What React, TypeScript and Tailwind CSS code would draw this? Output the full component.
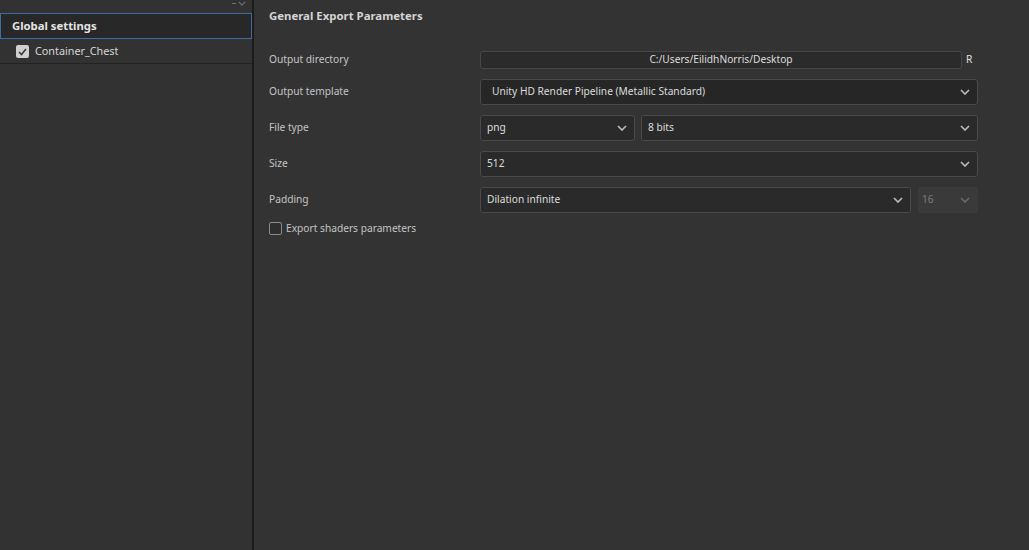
import React from "react";

const Chevron = ({ className = "" }: { className?: string }) => (
  <svg width="10" height="6" viewBox="0 0 10 6" className={className} fill="none">
    <path d="M1 1 L5 5 L9 1" stroke="currentColor" strokeWidth="1.6" />
  </svg>
);

const Select = ({ text, className = "", pl = "pl-[6px]", disabled = false }: { text: string; className?: string; pl?: string; disabled?: boolean }) => (
  <div
    className={`flex h-[26px] items-center justify-between rounded-[3px] border pr-[7px] ${pl} ${
      disabled ? "border-[#3b3b3b] bg-[#3a3a3a] text-[#7a7a7a]" : "border-[#4a4a4a] bg-[#2a2a2a] text-[#dcdcdc]"
    } ${className}`}
  >
    <span>{text}</span>
    <Chevron className={disabled ? "text-[#6a6a6a]" : "text-[#bdbdbd]"} />
  </div>
);

const Label = ({ children }: { children: React.ReactNode }) => (
  <div className="w-[211px] shrink-0 text-[#c4c4c4]">{children}</div>
);

export default function App() {
  return (
    <div
      className="flex h-[550px] w-[1029px] overflow-hidden bg-[#333333] text-[10.2px]"
      style={{ fontFamily: '"Noto Sans", "Open Sans", sans-serif' }}
    >
      {/* Left panel */}
      <div className="flex w-[252px] shrink-0 flex-col bg-[#323232]">
        <div className="flex h-[13px] items-start justify-end pr-[6px] text-[#6e6e6e]">
          <div className="flex items-center gap-[2px] pt-[1px]">
            <div className="h-[1px] w-[4px] bg-[#6e6e6e]" />
            <Chevron className="h-[5px] w-[8px]" />
          </div>
        </div>
        <div className="flex h-[26px] items-center border border-[#3c6ea6] bg-[#282828] pl-[11px] text-[11.3px] font-bold text-[#e4e4e4]">
          Global settings
        </div>
        <div className="flex h-[25px] items-center gap-[6px] border-b border-[#232323] pl-[16px] pt-[1px] text-[10.8px] text-[#d6d6d6]">
          <div className="flex h-[13px] w-[13px] items-center justify-center rounded-[2px] bg-[#cfcfcf]">
            <svg width="9" height="8" viewBox="0 0 9 8" fill="none">
              <path d="M1 4 L3.5 6.5 L8 1" stroke="#3a3a3a" strokeWidth="1.6" />
            </svg>
          </div>
          <span>Container_Chest</span>
        </div>
      </div>
      {/* Divider */}
      <div className="w-[2px] shrink-0 bg-[#1c1c1c]" />
      {/* Right panel */}
      <div className="flex flex-1 flex-col pl-[15px] pr-[51px]">
        <div className="pt-[7px] text-[11.4px] font-bold text-[#d4d4d4]">General Export Parameters</div>
        <div className="mt-[27px] flex h-[18px] items-center">
          <Label>Output directory</Label>
          <div className="flex h-[18px] flex-1 items-center justify-center rounded-[3px] border border-[#474747] bg-[#2b2b2b] text-[#dcdcdc]">
            C:/Users/EilidhNorris/Desktop
          </div>
          <div className="w-[16px] pl-[4px] text-[#e0e0e0]">R</div>
        </div>
        <div className="mt-[10px] flex items-center">
          <Label>Output template</Label>
          <Select text="Unity HD Render Pipeline (Metallic Standard)" pl="pl-[11px]" className="flex-1 bg-[#262626]" />
        </div>
        <div className="mt-[10px] flex items-center">
          <Label>File type</Label>
          <Select text="png" className="w-[155px]" />
          <Select text="8 bits" className="ml-[6px] flex-1" />
        </div>
        <div className="mt-[10px] flex items-center">
          <Label>Size</Label>
          <Select text="512" className="flex-1" />
        </div>
        <div className="mt-[10px] flex items-center">
          <Label>Padding</Label>
          <Select text="Dilation infinite" className="flex-1" />
          <Select text="16" className="ml-[7px] w-[60px]" pl="pl-[3px]" disabled />
        </div>
        <div className="mt-[8px] flex items-center gap-[4px] text-[#c4c4c4]">
          <div className="h-[13px] w-[13px] rounded-[2px] border border-[#8a8a8a] bg-[#2e2e2e]" />
          <span>Export shaders parameters</span>
        </div>
      </div>
    </div>
  );
}
